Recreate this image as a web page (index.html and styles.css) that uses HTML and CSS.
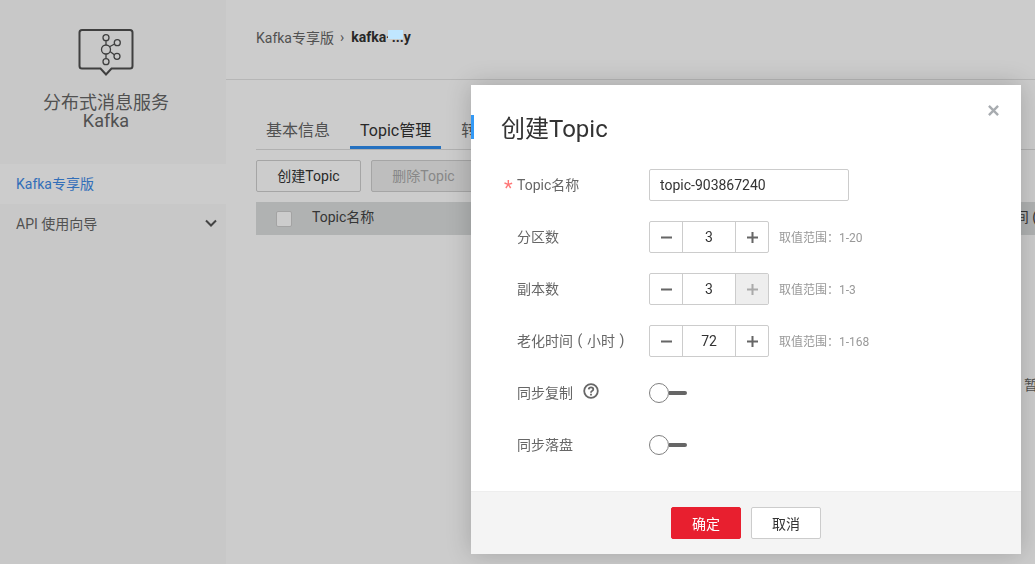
FILE: index.html
```html
<!DOCTYPE html>
<html lang="zh-CN">
<head>
    <meta charset="UTF-8">
    <meta name="viewport" content="width=device-width, initial-scale=1.0">
    <title>Kafka专享版</title>
    <link rel="stylesheet" href="styles.css">
</head>
<body>
    <div class="page">
        <aside class="sidebar">
            <div class="brand">
                <svg class="brand-icon" width="56" height="50" viewBox="0 0 56 50" fill="none" stroke="#4f4f4f">
                    <path d="M4 2H52Q54.500 2 54.500 4.500V38Q54.500 40.500 52 40.500H33.500L28 46.500L22.500 40.500H4Q1.500 40.500 1.500 38V4.500Q1.500 2 4 2Z" stroke-width="2"/>
                    <g stroke-width="1.300">
                        <circle cx="28" cy="9.700" r="3"/>
                        <circle cx="39.300" cy="14.700" r="3"/>
                        <circle cx="28" cy="21.500" r="4.500"/>
                        <circle cx="39" cy="28.300" r="3"/>
                        <circle cx="28" cy="33.700" r="3"/>
                        <path d="M28 12.700V17M28 26V30.700M31.500 18.700L36.600 16M32 23.500L36.300 26.800"/>
                    </g>
                </svg>
                <div class="brand-name">分布式消息服务<br>Kafka</div>
            </div>
            <nav>
                <div class="nav-item active">Kafka专享版</div>
                <div class="nav-item">
                    API 使用向导
                    <svg width="12" height="8" viewBox="0 0 12 8" fill="none" stroke="#555" stroke-width="2"><path d="M1 1.500L6 6.500L11 1.500"/></svg>
                </div>
            </nav>
        </aside>

        <main class="main">
            <header class="topbar">
                <span class="crumb">Kafka专享版</span>
                <span class="crumb-sep">›</span>
                <span class="crumb-current">kafka-...y<span class="mask"></span></span>
            </header>
            <div class="content">
                <div class="tabs">
                    <div class="tab">基本信息</div>
                    <div class="tab active">Topic管理</div>
                    <div class="tab">转储</div>
                </div>
                <div class="toolbar">
                    <button type="button" class="btn">创建Topic</button>
                    <button type="button" class="btn disabled">删除Topic</button>
                </div>
                <div class="table-head">
                    <span class="checkbox"></span>
                    <span class="col-name">Topic名称</span>
                    <span class="col-last">创建时间 (</span>
                </div>
                <div class="empty">暂无数据</div>
            </div>
        </main>
    </div>

    <div class="overlay"></div>

    <div class="modal">
        <span class="modal-mark"></span>
        <svg class="modal-close" width="11" height="11" viewBox="0 0 12 12" stroke="#a8acb0" stroke-width="2.600"><path d="M1 1L11 11M11 1L1 11"/></svg>
        <h2 class="modal-title">创建Topic</h2>
        <form class="modal-form">
            <div class="row">
                <label class="field-label"><span class="req">*</span>Topic名称</label>
                <input class="text-input" type="text" value="topic-903867240">
            </div>
            <div class="row">
                <label class="field-label">分区数</label>
                <div class="stepper">
                    <span class="step">
                        <svg width="11" height="11" viewBox="0 0 12 12" stroke="#666" stroke-width="2.200"><path d="M0 6H12"/></svg>
                    </span>
                    <span class="step-value">3</span>
                    <span class="step">
                        <svg width="11" height="11" viewBox="0 0 12 12" stroke="#666" stroke-width="2.200"><path d="M0 6H12M6 0V12"/></svg>
                    </span>
                </div>
                <span class="hint">取值范围<span class="punct">：</span>1-20</span>
            </div>
            <div class="row">
                <label class="field-label">副本数</label>
                <div class="stepper">
                    <span class="step">
                        <svg width="11" height="11" viewBox="0 0 12 12" stroke="#666" stroke-width="2.200"><path d="M0 6H12"/></svg>
                    </span>
                    <span class="step-value">3</span>
                    <span class="step off">
                        <svg width="11" height="11" viewBox="0 0 12 12" stroke="#aaa" stroke-width="2.200"><path d="M0 6H12M6 0V12"/></svg>
                    </span>
                </div>
                <span class="hint">取值范围<span class="punct">：</span>1-3</span>
            </div>
            <div class="row">
                <label class="field-label">老化时间<span class="paren">(</span>小时<span class="paren">)</span></label>
                <div class="stepper">
                    <span class="step">
                        <svg width="11" height="11" viewBox="0 0 12 12" stroke="#666" stroke-width="2.200"><path d="M0 6H12"/></svg>
                    </span>
                    <span class="step-value">72</span>
                    <span class="step">
                        <svg width="11" height="11" viewBox="0 0 12 12" stroke="#666" stroke-width="2.200"><path d="M0 6H12M6 0V12"/></svg>
                    </span>
                </div>
                <span class="hint">取值范围<span class="punct">：</span>1-168</span>
            </div>
            <div class="row">
                <label class="field-label">同步复制
                    <svg class="help" width="16" height="16" viewBox="0 0 16 16" fill="none" stroke="#666" stroke-width="1.800">
                        <circle cx="8" cy="8" r="6.800"/>
                        <path d="M5.700 6.300Q5.900 4.300 8 4.300Q10.300 4.300 10.300 6.200Q10.300 7.300 9 8Q8 8.500 8 9.700"/>
                        <path d="M8 10.800V12.400"/>
                    </svg>
                </label>
                <span class="switch"><span class="switch-knob"></span><span class="switch-bar"></span></span>
            </div>
            <div class="row">
                <label class="field-label">同步落盘</label>
                <span class="switch"><span class="switch-knob"></span><span class="switch-bar"></span></span>
            </div>
        </form>
        <div class="modal-footer">
            <button type="button" class="btn-ok">确定</button>
            <button type="button" class="btn-cancel">取消</button>
        </div>
    </div>
</body>
</html>
```

FILE: styles.css
```css
* {
    box-sizing: border-box;
}
html, body {
    height: 100%;
}
body {
    margin: 0;
    overflow: hidden;
    font-family: Roboto, "Noto Sans CJK SC", sans-serif;
    font-size: 14px;
    color: #333;
    background-color: #fff;
}
.page {
    display: flex;
    height: 564px;
}

/* sidebar */
.sidebar {
    width: 226px;
    flex-shrink: 0;
    background-color: #fafbfb;
}
.brand {
    height: 164px;
    padding: 28px 14px 0 0;
    text-align: center;
}
.brand-icon {
    display: block;
    margin: 0 auto 0 78px;
}
.brand-name {
    margin-top: 16px;
    font-size: 18px;
    line-height: 18px;
    color: #666;
}
.nav-item {
    display: flex;
    align-items: center;
    justify-content: space-between;
    height: 40px;
    padding: 0 9px 2px 16px;
    color: #666;
}
.nav-item.active {
    background-color: #fff;
    color: #3f8be8;
}

/* main area */
.main {
    flex: 1;
    min-width: 0;
}
.topbar {
    display: flex;
    align-items: center;
    height: 80px;
    padding: 0 0 6px 30px;
    border-bottom: 1px solid #e4e4e4;
}
.crumb {
    color: #666;
}
.crumb-sep {
    margin: 0 7px 0 6px;
    color: #666;
}
.crumb-current {
    position: relative;
    font-weight: 700;
    color: #333;
}
/* blurred out in the source, sits above the dim layer */
.mask {
    position: absolute;
    z-index: 1;
    top: 1px;
    left: 37px;
    width: 15px;
    height: 9px;
    background-color: #c0e6ff;
}
.content {
    padding: 0 0 0 30px;
}
.tabs {
    display: flex;
    height: 70px;
    padding-top: 37px;
    border-bottom: 1px solid #ddd;
    white-space: nowrap;
}
.tab {
    height: 32px;
    padding: 0 10px;
    margin-right: 10px;
    font-size: 16px;
    line-height: 28px;
    color: #666;
}
.tab.active {
    border-bottom: 3px solid #2f8ef0;
    color: #333;
}
.toolbar {
    display: flex;
    gap: 10px;
    margin-top: 10px;
}
.btn {
    width: 105px;
    height: 32px;
    padding: 0 0 2px;
    border: 1px solid #cfcfcf;
    border-radius: 2px;
    background-color: #fff;
    font: inherit;
    color: #333;
}
.btn.disabled {
    background-color: #eee;
    color: #aaa;
}
.table-head {
    display: flex;
    align-items: center;
    justify-content: space-between;
    height: 33px;
    margin-top: 10px;
    padding-left: 20px;
    background-color: #dcdfdf;
    white-space: nowrap;
}
.checkbox {
    width: 16px;
    height: 16px;
    flex-shrink: 0;
    border: 1px solid #ccc;
    border-radius: 2px;
    background-color: #fff;
}
.col-name {
    margin-left: 20px;
    margin-right: auto;
    padding-bottom: 5px;
    color: #444;
}
.col-last {
    margin-right: -2px;
    padding-bottom: 5px;
    color: #444;
}
.empty {
    margin-top: 139px;
    margin-left: 768px;
    white-space: nowrap;
    color: #666;
}

.overlay {
    position: fixed;
    inset: 0;
    background-color: rgba(0, 0, 0, 0.2);
}

/* dialog */
.modal {
    position: absolute;
    z-index: 2;
    top: 85px;
    left: 471px;
    width: 550px;
    height: 469px;
    background-color: #fff;
    box-shadow: 0 0 24px rgba(0, 0, 0, 0.2);
}
.modal-mark {
    position: absolute;
    top: 30px;
    left: 0;
    width: 3px;
    height: 24px;
    background-color: #3399f5;
}
.modal-close {
    position: absolute;
    top: 20px;
    left: 517px;
}
.modal-title {
    margin: 0;
    padding: 27px 0 0 30px;
    height: 84px;
    font-size: 24px;
    font-weight: 400;
    line-height: 34px;
    color: #333;
}
.modal-form {
    height: 322px;
}
.row {
    display: flex;
    align-items: center;
    height: 32px;
    margin-bottom: 20px;
    padding-left: 46px;
}
.field-label {
    position: relative;
    display: flex;
    align-items: center;
    width: 132px;
    flex-shrink: 0;
    padding-bottom: 3px;
    font-size: 14px;
    color: #666;
    white-space: nowrap;
}
.paren {
    width: 14px;
    text-align: center;
}
.req {
    position: absolute;
    left: -13px;
    top: 4px;
    font-size: 20px;
    line-height: 20px;
    color: #f77;
}
.help {
    margin: -1px 0 0 10px;
}
.text-input {
    width: 200px;
    height: 32px;
    padding: 0 10px;
    border: 1px solid #ccc;
    border-radius: 2px;
    font: inherit;
    color: #333;
}
.stepper {
    display: flex;
    width: 120px;
    height: 32px;
    border: 1px solid #ccc;
    border-radius: 2px;
}
.step {
    display: flex;
    align-items: center;
    justify-content: center;
    width: 32px;
    flex-shrink: 0;
}
.step.off {
    background-color: #eee;
}
.step-value {
    flex: 1;
    border-left: 1px solid #ccc;
    border-right: 1px solid #ccc;
    text-align: center;
    line-height: 30px;
}
.hint {
    margin: -1px 0 0 10px;
    font-size: 12px;
    color: #999;
    white-space: nowrap;
}
.punct {
    font-family: "Noto Sans CJK TC", sans-serif;
}
.switch {
    display: flex;
    align-items: center;
}
.switch-knob {
    width: 20px;
    height: 20px;
    border: 1px solid #808080;
    border-radius: 50%;
    background-color: #fff;
}
.switch-bar {
    width: 18px;
    height: 4px;
    border-radius: 0 2px 2px 0;
    background-color: #666;
}
.modal-footer {
    display: flex;
    justify-content: center;
    gap: 10px;
    height: 63px;
    padding-top: 15px;
    border-top: 1px solid #eee;
    background-color: #f4f4f4;
}
.btn-ok, .btn-cancel {
    width: 70px;
    height: 32px;
    padding: 0;
    border-radius: 2px;
    font: inherit;
}
.btn-ok {
    border: 1px solid #e81f2f;
    background-color: #e81f2f;
    color: #fff;
}
.btn-cancel {
    border: 1px solid #ccc;
    background-color: #fff;
    color: #333;
}
```
